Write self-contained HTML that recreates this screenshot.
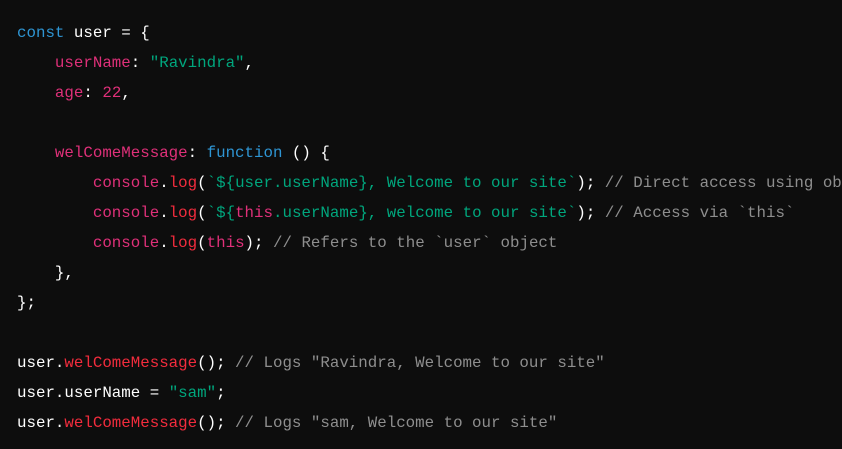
<!DOCTYPE html>
<html><head><style>
body{margin:0;background:#0d0d0d;width:842px;height:449px;overflow:hidden;position:relative}
pre{margin:0;position:absolute;left:17px;right:0;top:18px;overflow:hidden;font-family:"Liberation Mono",monospace;font-size:15.8px;line-height:30px;color:#fff;white-space:pre}
.k{color:#2e95d3}.p{color:#df3079}.s{color:#00a67d}.f{color:#f22c3d}.c{color:#8e8e8e}
</style></head><body><pre><span class="k">const</span> user = {
    <span class="p">userName</span>: <span class="s">"Ravindra"</span>,
    <span class="p">age</span>: <span class="p">22</span>,

    <span class="p">welComeMessage</span>: <span class="k">function</span> () {
        <span class="p">console</span>.<span class="f">log</span>(<span class="s">`${user.userName}, Welcome to our site`</span>); <span class="c">// Direct access using object name</span>
        <span class="p">console</span>.<span class="f">log</span>(<span class="s">`${<span class="p">this</span>.userName}, welcome to our site`</span>); <span class="c">// Access via `this`</span>
        <span class="p">console</span>.<span class="f">log</span>(<span class="p">this</span>); <span class="c">// Refers to the `user` object</span>
    },
};

user.<span class="f">welComeMessage</span>(); <span class="c">// Logs "Ravindra, Welcome to our site"</span>
user.userName = <span class="s">"sam"</span>;
user.<span class="f">welComeMessage</span>(); <span class="c">// Logs "sam, Welcome to our site"</span></pre></body></html>
